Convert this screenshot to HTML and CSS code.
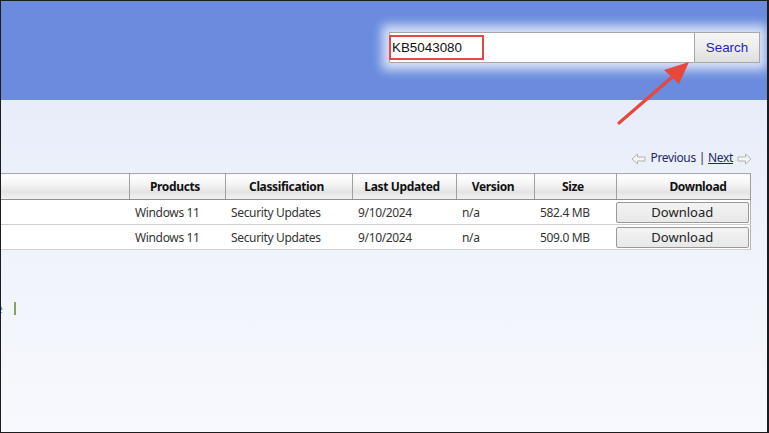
FILE: index.html
```html
<!DOCTYPE html>
<html>
<head>
<meta charset="utf-8">
<link rel="stylesheet" href="styles.css">
</head>
<body>
<div class="frame">
  <div class="header">
    <div class="search">
      <div class="search-input">KB5043080</div>
      <div class="search-btn">Search</div>
    </div>
  </div>
  <div class="main">
    <div class="pager">
      <svg class="parrow" width="15" height="12" viewBox="0 0 15 12"><path d="M1 6 L6.5 1 V4 H14 V8 H6.5 V11 Z" fill="#f4f4f4" stroke="#b4b4b4" stroke-width="1"/></svg>
      <span class="ptext">Previous</span><span class="psep">|</span><span class="plink">Next</span>
      <svg class="parrow" width="15" height="12" viewBox="0 0 15 12"><path d="M14 6 L8.5 1 V4 H1 V8 H8.5 V11 Z" fill="#f4f4f4" stroke="#b4b4b4" stroke-width="1"/></svg>
    </div>
    <table class="results">
      <colgroup>
        <col class="c-title"><col class="c-prod"><col class="c-class"><col class="c-date"><col class="c-ver"><col class="c-size"><col class="c-dl">
      </colgroup>
      <thead>
        <tr>
          <th></th><th>Products</th><th>Classification</th><th>Last Updated</th><th>Version</th><th>Size</th><th class="th-dl">Download</th>
        </tr>
      </thead>
      <tbody>
        <tr>
          <td></td><td>Windows 11</td><td>Security Updates</td><td>9/10/2024</td><td>n/a</td><td>582.4 MB</td><td class="td-dl"><div class="dl-btn">Download</div></td>
        </tr>
        <tr>
          <td></td><td>Windows 11</td><td>Security Updates</td><td>9/10/2024</td><td>n/a</td><td>509.0 MB</td><td class="td-dl"><div class="dl-btn">Download</div></td>
        </tr>
      </tbody>
    </table>
    <div class="footer-links"><span class="flink">e</span><span class="fbar"></span></div>
  </div>
  <div class="highlight"></div>
  <svg class="annot-arrow" width="769" height="433" viewBox="0 0 769 433">
    <line x1="619" y1="123" x2="678" y2="72" stroke="#e8473d" stroke-width="3.2" stroke-linecap="round"/>
    <path d="M689 62 L664 70 L679 84 Z" fill="#e8473d"/>
  </svg>
</div>
</body>
</html>
```
FILE: styles.css
```css
html, body {
  margin: 0;
  padding: 0;
}
body {
  width: 769px;
  height: 433px;
  overflow: hidden;
  background: #fff;
  font-family: "Noto Sans", "Open Sans", sans-serif;
}
.frame {
  position: relative;
  width: 769px;
  height: 433px;
  box-sizing: border-box;
  border: 1px solid #1c1c1c;
  border-right-width: 2px;
  overflow: hidden;
  display: flex;
  flex-direction: column;
  background: linear-gradient(#e1e8f8, #eef2fb 50%, #f8f9fe);
}
.header {
  height: 99px;
  flex: none;
  background: #6a8bde;
  display: flex;
  justify-content: flex-end;
  align-items: flex-start;
  padding-top: 31px;
  padding-right: 7px;
  box-sizing: border-box;
}
.search {
  display: flex;
  box-shadow: 0 0 10px 7px rgba(255, 255, 255, 0.75);
}
.search-input {
  width: 302px;
  height: 29px;
  background: #fff;
  border: 1px solid #a8a8a8;
  border-right: none;
  font-family: "Liberation Sans", Arial, sans-serif;
  font-size: 13.4px;
  color: #111;
  line-height: 29px;
  padding-left: 2px;
}
.search-btn {
  width: 64px;
  height: 29px;
  border: 1px solid #a8a8a8;
  background: linear-gradient(#f6f6f6, #ededed 50%, #dedede);
  font-family: "Liberation Sans", Arial, sans-serif;
  font-size: 13.4px;
  color: #2323c4;
  line-height: 29px;
  text-align: center;
}
.main {
  flex: 1;
  display: flex;
  flex-direction: column;
  padding-top: 49px;
  letter-spacing: -0.35px;
}
.pager {
  display: flex;
  align-items: center;
  justify-content: flex-end;
  padding-right: 15px;
  height: 16px;
  font-size: 12px;
  color: #1e2a66;
  gap: 2px;
}
.parrow { margin-top: 3px; margin-right: 2px; }
.parrow:last-child { margin-right: 0; margin-left: 2px; }
.psep { margin: 0 1px; }
.plink { text-decoration: underline; }
.results {
  margin-top: 8px;
  border-collapse: collapse;
  table-layout: fixed;
  width: 749px;
  font-size: 12px;
  color: #222;
}
.c-title { width: 128px; }
.c-prod { width: 96px; }
.c-class { width: 127px; }
.c-date { width: 104px; }
.c-ver { width: 78px; }
.c-size { width: 82px; }
.c-dl { width: 134px; }
.results th {
  height: 25px;
  padding: 0 4px 0 0;
  font-weight: bold;
  text-align: center;
  color: #111;
  background: linear-gradient(#ffffff, #f6f6f6 35%, #e4e4e4 70%, #f2f2f2);
  border-top: 1px solid #a9a9a9;
  border-bottom: 1px solid #8f8f8f;
  border-left: 1px solid #a0a0a0;
  border-right: 1px solid #a0a0a0;
}
.results th:first-child { border-left: none; }
.results th.th-dl { padding-left: 30px; padding-right: 0; }
.results td {
  height: 24px;
  padding: 0 0 0 6px;
  background: #fff;
  border-bottom: 1px solid #cfcfcf;
  white-space: nowrap;
  color: #333;
}
.results td:last-child { border-right: 1px solid #b5b5b5; }
.results td.td-dl { padding: 0 1px 0 0; }
.dl-btn {
  height: 19px;
  border: 1px solid #9a9a9a;
  border-radius: 2px;
  background: linear-gradient(#f3f3f3, #e8e8e8);
  text-align: center;
  line-height: 18px;
  font-size: 13px;
  letter-spacing: 0;
  color: #222;
}
.footer-links {
  margin-top: 51px;
  display: flex;
  align-items: center;
  height: 14px;
}
.flink {
  margin-left: -5px;
  font-size: 12px;
  color: #6a7fb0;
}
.fbar {
  margin-left: 12px;
  width: 2px;
  height: 13px;
  background: #8aa35c;
}
.highlight {
  position: absolute;
  left: 388px;
  top: 34px;
  width: 91px;
  height: 21px;
  border: 2px solid #e34848;
}
.annot-arrow {
  position: absolute;
  left: -1px;
  top: -1px;
}
```
